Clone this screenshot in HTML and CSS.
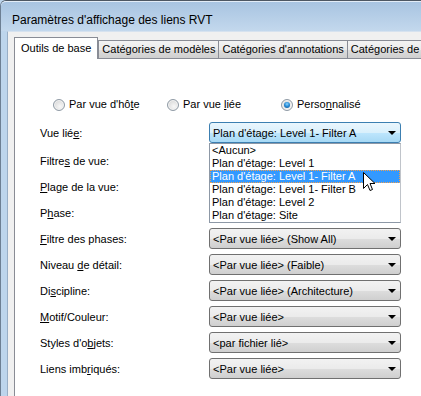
FILE: index.html
```html
<!DOCTYPE html>
<html lang="fr">
<head>
    <meta charset="UTF-8">
    <meta name="viewport" content="width=device-width, initial-scale=1.0">
    <link rel="stylesheet" href="styles.css">
</head>
<body>
    <div class="window">
        <div class="titlebar">Paramètres d'affichage des liens RVT</div>

        <div class="client">
            <div class="tabs">
                <div class="tab active">Outils de base</div>
                <div class="tab">Catégories de modèles</div>
                <div class="tab">Catégories d'annotations</div>
                <div class="tab">Catégories de modèles importés</div>
            </div>

            <div class="panel">
                <div class="view-mode">
                    <label class="radio"><span class="radio-dot"></span><span>Par vue d'hô<u>t</u>e</span></label>
                    <label class="radio"><span class="radio-dot"></span><span>Par vue <u>l</u>iée</span></label>
                    <label class="radio checked"><span class="radio-dot"></span><span>Perso<u>n</u>nalisé</span></label>
                </div>

                <div class="fields">
                    <div class="field field-first">
                        <span class="field-label">Vue lié<u>e</u>:</span>
                        <div class="combo focused">Plan d'étage: Level 1- Filter A<span class="arrow"></span></div>
                    </div>
                    <!-- these three combos sit under the open list -->
                    <div class="field">
                        <span class="field-label">Filtre<u>s</u> de vue:</span>
                        <div class="combo"><span></span><span class="arrow"></span></div>
                    </div>
                    <div class="field">
                        <span class="field-label"><u>P</u>lage de la vue:</span>
                        <div class="combo"><span></span><span class="arrow"></span></div>
                    </div>
                    <div class="field">
                        <span class="field-label">P<u>h</u>ase:</span>
                        <div class="combo"><span></span><span class="arrow"></span></div>
                    </div>
                    <div class="field">
                        <span class="field-label"><u>F</u>iltre des phases:</span>
                        <div class="combo">&lt;Par vue liée&gt; (Show All)<span class="arrow"></span></div>
                    </div>
                    <div class="field">
                        <span class="field-label">Niveau <u>d</u>e détail:</span>
                        <div class="combo">&lt;Par vue liée&gt; (Faible)<span class="arrow"></span></div>
                    </div>
                    <div class="field">
                        <span class="field-label">Di<u>s</u>cipline:</span>
                        <div class="combo">&lt;Par vue liée&gt; (Architecture)<span class="arrow"></span></div>
                    </div>
                    <div class="field">
                        <span class="field-label"><u>M</u>otif/Couleur:</span>
                        <div class="combo">&lt;Par vue liée&gt;<span class="arrow"></span></div>
                    </div>
                    <div class="field">
                        <span class="field-label">Styles d'o<u>b</u>jets:</span>
                        <div class="combo">&lt;par fichier lié&gt;<span class="arrow"></span></div>
                    </div>
                    <div class="field">
                        <span class="field-label">Liens imb<u>r</u>iqués:</span>
                        <div class="combo">&lt;Par vue liée&gt;<span class="arrow"></span></div>
                    </div>
                </div>

                <!-- open list of the "Vue liée" combo -->
                <ul class="dropdown">
                    <li>&lt;Aucun&gt;</li>
                    <li>Plan d'étage: Level 1</li>
                    <li class="selected">Plan d'étage: Level 1- Filter A</li>
                    <li>Plan d'étage: Level 1- Filter B</li>
                    <li>Plan d'étage: Level 2</li>
                    <li>Plan d'étage: Site</li>
                </ul>

                <svg class="cursor" width="13" height="20" viewBox="0 0 13 20">
                    <path d="M0.5 0.5 L0.5 16.5 L4.5 12.5 L7 18.5 L9.5 17.5 L7 11.5 L12 11.5 Z" fill="#fff" stroke="#000" stroke-width="1"/>
                </svg>
            </div>
        </div>
    </div>
</body>
</html>
```

FILE: styles.css
```css
body {
    margin: 0;
    padding: 0;
    width: 421px;
    height: 396px;
    overflow: hidden;
    font-family: "Liberation Sans", Arial, sans-serif;
    font-size: 11px;
    color: #000;
    background-color: #bdd5ec;
}

.window {
    height: 396px;
    display: flex;
    flex-direction: column;
    background-color: #bdd5ec; /* window frame */
    border-top: 1px solid #4d5763;
    border-left: 1px solid #6d7f93;
    border-top-left-radius: 6px;
    box-sizing: border-box;
}

.titlebar {
    height: 30px;
    padding: 10px 0 0 11px;
    box-sizing: border-box;
    font-size: 12px;
    line-height: 16px;
    background: linear-gradient(#a8c4e1, #c3d8ed);
    border-top-left-radius: 5px;
    border-top: 1px solid #e2ecf7;
}

.client {
    flex: 1;
    display: flex;
    flex-direction: column;
    margin-left: 6px;
    padding: 5px 0 0 6px;
    background-color: #f0f0f0;
    border-left: 1px solid #98aec6;
    border-top: 1px solid #d6e2ef;
    overflow: hidden;
}

.tabs {
    display: flex;
    align-items: flex-end;
    height: 21px;
    white-space: nowrap;
}

.tab {
    height: 18px;
    box-sizing: border-box;
    padding: 0 3px;
    margin-left: -1px;
    line-height: 17px;
    border: 1px solid #898c95;
    border-bottom: none;
    background: linear-gradient(#f3f3f3 0%, #ebebeb 50%, #dddddd 51%, #cfcfcf 100%);
}

.tab.active {
    position: relative;
    z-index: 1;
    height: 22px;
    margin-left: 0;
    margin-bottom: -1px;
    margin-right: 1px;
    padding: 0 6px;
    line-height: 20px;
    background: #fff;
}

.panel {
    flex: 1;
    position: relative;
    background-color: #fff;
    border-top: 1px solid #898c95;
    border-left: 1px solid #898c95;
}

.view-mode {
    display: grid;
    grid-template-columns: 114px 114px 114px;
    margin: 39px 0 0 38px;
}

.radio {
    display: flex;
    align-items: center;
    gap: 4px;
    height: 13px;
    line-height: 13px;
    white-space: nowrap;
}

.radio-dot {
    width: 10px;
    height: 10px;
    border-radius: 50%;
    border: 1px solid #8f9aa5;
    background: radial-gradient(circle at 60% 65%, #f8f8f8 0%, #e6e6e6 45%, #cfcfcf 100%);
    box-shadow: inset 0 0 0 1px #f4f4f4;
    display: flex;
    align-items: center;
    justify-content: center;
}

.radio.checked .radio-dot::after {
    content: "";
    width: 6px;
    height: 6px;
    border-radius: 50%;
    background: radial-gradient(circle at 50% 35%, #8fd6ff 0%, #2a8ed8 45%, #0c4c8c 100%);
}

.fields {
    margin: 11px 0 0 25px;
    display: flex;
    flex-direction: column;
    gap: 5px;
}

.field {
    display: flex;
    align-items: center;
    height: 21px;
}

.field-first {
    margin-bottom: 2px;
}

.field-label {
    width: 169px;
    flex-shrink: 0;
}

.combo {
    width: 192px;
    height: 21px;
    box-sizing: border-box;
    display: flex;
    align-items: center;
    justify-content: space-between;
    padding: 0 4px 0 3px;
    border: 1px solid #707070;
    border-radius: 3px;
    background: linear-gradient(#f2f2f2 0%, #ebebeb 50%, #dddddd 51%, #cfcfcf 100%);
    white-space: nowrap;
}

.combo.focused {
    border-color: #3c7fb1;
    background: linear-gradient(#eaf6fd 0%, #d9f0fc 50%, #bee6fd 51%, #a7d9f5 100%);
}

.arrow {
    width: 0;
    height: 0;
    border-left: 4px solid transparent;
    border-right: 4px solid transparent;
    border-top: 4px solid #000;
}

.dropdown {
    position: absolute;
    left: 194px;
    top: 84px;
    width: 192px;
    margin: 0;
    padding: 0;
    list-style: none;
    box-sizing: border-box;
    border: 1px solid #8d98a6;
    border-right-color: #c0c4ca;
    background-color: #fff;
}

.dropdown li {
    height: 13px;
    line-height: 13px;
    padding-left: 2px;
    white-space: nowrap;
}

.dropdown li.selected {
    background-color: #3399ff;
    color: #fff;
    outline: 1px dotted #f0a050;
    outline-offset: -1px;
}

.cursor {
    position: absolute;
    left: 348px;
    top: 113px;
}
```
